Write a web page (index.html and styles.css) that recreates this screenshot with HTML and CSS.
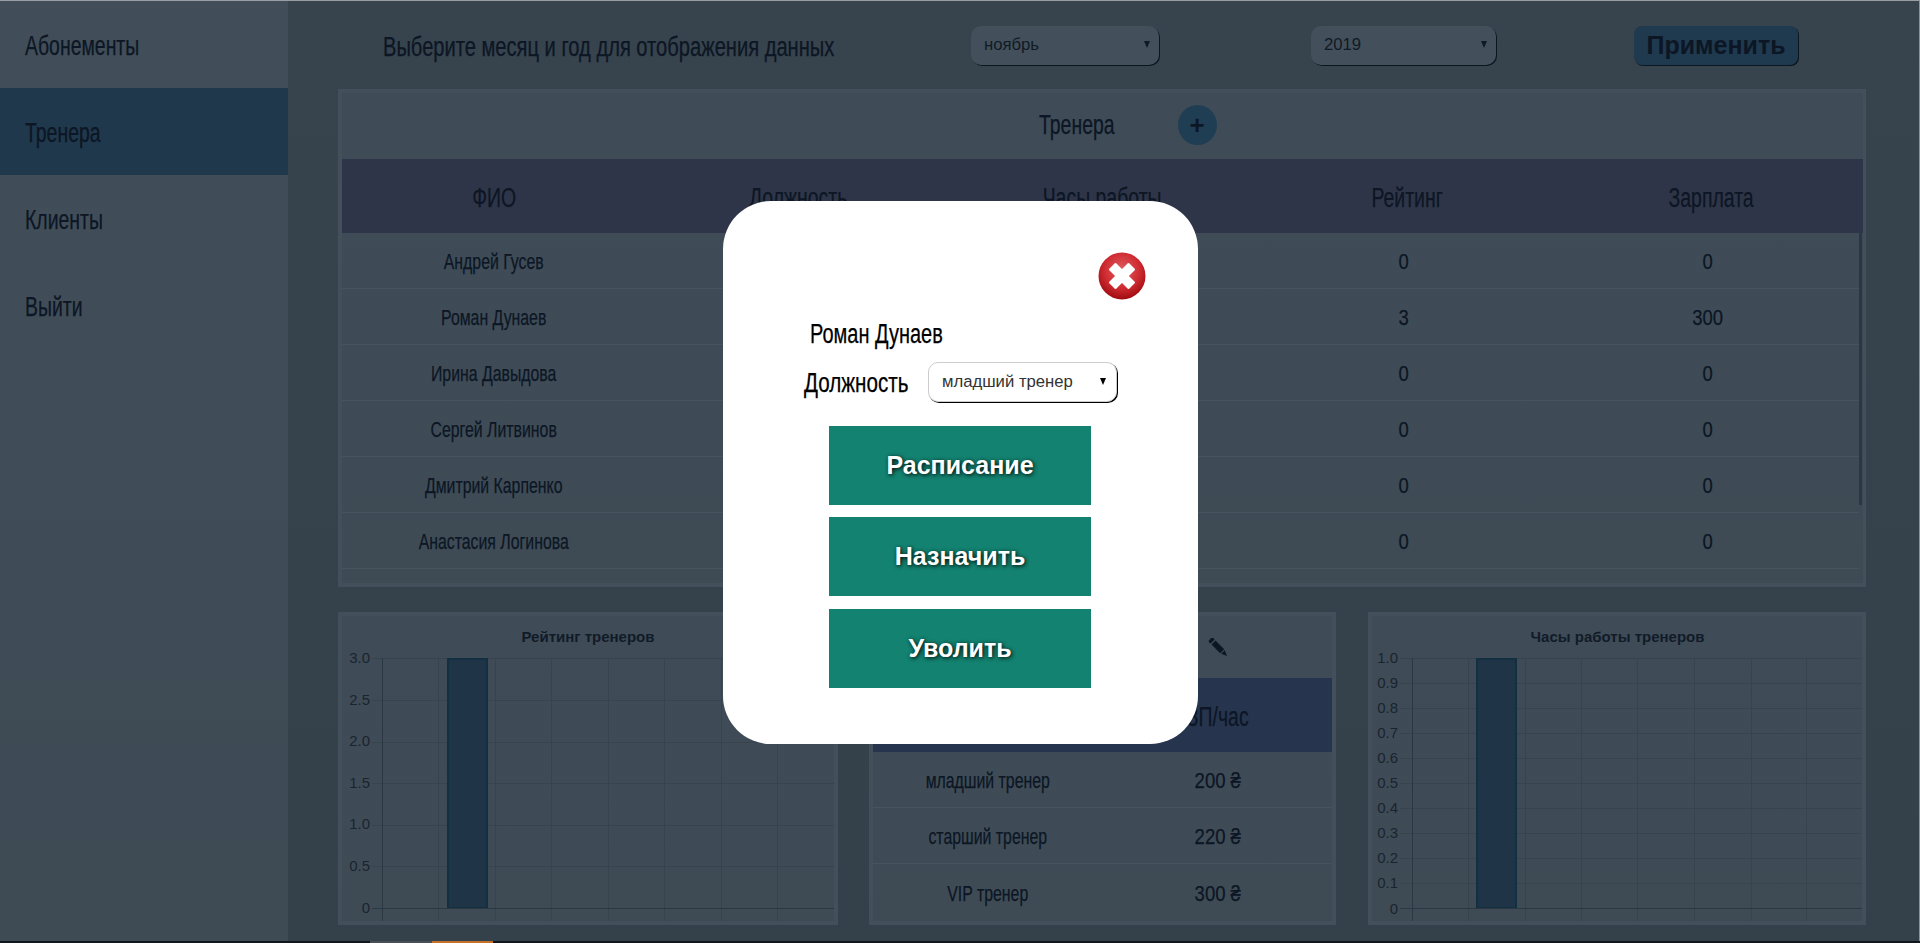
FILE: index.html
```html
<!DOCTYPE html>
<html lang="ru">
<head>
<meta charset="utf-8">
<title>Тренера</title>
<link rel="stylesheet" href="styles.css">
</head>
<body>
<div class="app">
  <nav class="sidebar">
    <a class="nav-item"><span class="cond-left">Абонементы</span></a>
    <a class="nav-item nav-item-active"><span class="cond-left">Тренера</span></a>
    <a class="nav-item"><span class="cond-left">Клиенты</span></a>
    <a class="nav-item"><span class="cond-left">Выйти</span></a>
  </nav>
  <main class="main">
    <header class="filters">
      <span class="filters-label cond-left">Выберите месяц и год для отображения данных</span>
      <div class="fake-select month-select"><span>ноябрь</span><i class="arrow"></i></div>
      <div class="fake-select year-select"><span>2019</span><i class="arrow"></i></div>
      <button class="apply">Применить</button>
    </header>
    <section class="panel trainers">
      <div class="panel-title-row">
        <span class="panel-title cond-left">Тренера</span>
        <span class="add-btn">+</span>
      </div>
      <div class="table-head cols-5">
        <span>ФИО</span><span>Должность</span><span>Часы работы</span><span>Рейтинг</span><span>Зарплата</span>
      </div>
      <div class="table-body">
        <div class="row cols-5"><span>Андрей Гусев</span><span></span><span></span><span class="num">0</span><span class="num">0</span></div>
        <div class="row cols-5"><span>Роман Дунаев</span><span></span><span></span><span class="num">3</span><span class="num">300</span></div>
        <div class="row cols-5"><span>Ирина Давыдова</span><span></span><span></span><span class="num">0</span><span class="num">0</span></div>
        <div class="row cols-5"><span>Сергей Литвинов</span><span></span><span></span><span class="num">0</span><span class="num">0</span></div>
        <div class="row cols-5"><span>Дмитрий Карпенко</span><span></span><span></span><span class="num">0</span><span class="num">0</span></div>
        <div class="row cols-5"><span>Анастасия Логинова</span><span></span><span></span><span class="num">0</span><span class="num">0</span></div>
      </div>
    </section>
    <div class="bottom">
      <section class="panel chart-panel chart-left">
        <svg class="chart" viewBox="0 0 492 305" width="492" height="305">
          <text class="chart-title" x="246" y="26">Рейтинг тренеров</text>
          <path class="grid" d="M30 42.500H492M30 84.500H492M30 126.500H492M30 167.500H492M30 209.500H492M30 250.500H492M96.500 42V305M153.500 42V305M209.500 42V305M266.500 42V305M322.500 42V305M379.500 42V305M435.500 42V305"/>
          <rect class="bar" x="106" y="43" width="39" height="249"/>
          <path class="axis" d="M40.500 42V305M30 292.500H492"/>
          <g class="ticks">
            <text x="28" y="47">3.0</text><text x="28" y="89">2.5</text><text x="28" y="130">2.0</text>
            <text x="28" y="172">1.5</text><text x="28" y="213">1.0</text><text x="28" y="255">0.5</text><text x="28" y="297">0</text>
          </g>
        </svg>
      </section>
      <section class="panel rates">
        <div class="panel-title-row rates-title">
          <svg class="pencil" viewBox="0 0 20 20" width="20" height="20">
            <path d="M1.200 3.200 L3.200 1.200 Q4.200 .4 5.200 1.200 L6.600 2.600 L2.600 6.600 L1.200 5.200 Q.4 4.200 1.200 3.200Z"/>
            <path d="M3.500 7.500 L7.500 3.500 L16.200 12.200 L12.200 16.200Z"/>
            <path d="M13.200 16.800 L16.800 13.200 L19 19Z"/>
          </svg>
        </div>
        <div class="table-head rates-head cols-2"><span></span><span>ЗП/час</span></div>
        <div class="row cols-2"><span>младший тренер</span><span class="num">200 ₴</span></div>
        <div class="row cols-2"><span>старший тренер</span><span class="num">220 ₴</span></div>
        <div class="row cols-2"><span>VIP тренер</span><span class="num">300 ₴</span></div>
      </section>
      <section class="panel chart-panel chart-right">
        <svg class="chart" viewBox="0 0 490 305" width="490" height="305">
          <text class="chart-title" x="245.500" y="26">Часы работы тренеров</text>
          <path class="grid" d="M28 42.500H490M28 67.500H490M28 92.500H490M28 117.500H490M28 142.500H490M28 167.500H490M28 192.500H490M28 217.500H490M28 242.500H490M28 267.500H490M96.500 42V305M153.500 42V305M209.500 42V305M265.500 42V305M322.500 42V305M379.500 42V305M434.500 42V305"/>
          <rect class="bar" x="105" y="43" width="39" height="249"/>
          <path class="axis" d="M40.500 42V305M28 292.500H490"/>
          <g class="ticks">
            <text x="26" y="47">1.0</text><text x="26" y="72">0.9</text><text x="26" y="97">0.8</text><text x="26" y="122">0.7</text><text x="26" y="147">0.6</text><text x="26" y="172">0.5</text><text x="26" y="197">0.4</text><text x="26" y="222">0.3</text><text x="26" y="247">0.2</text><text x="26" y="272">0.1</text><text x="26" y="298">0</text>
          </g>
        </svg>
      </section>
    </div>
  </main>
</div>
<div class="taskbar"><span class="task-tab"></span><span class="task-tab-active"></span></div>
<div class="modal">
  <div class="modal-close-row">
    <svg class="close-icon" viewBox="0 0 48 48" width="48" height="48">
      <defs>
        <radialGradient id="redBall" cx="50%" cy="38%" r="60%">
          <stop offset="0" stop-color="#e05f63"/><stop offset=".62" stop-color="#cf2c32"/><stop offset="1" stop-color="#a30e13"/>
        </radialGradient>
      </defs>
      <circle cx="24" cy="24" r="23.500" fill="url(#redBall)"/>
      <path d="M12 17.500 L17.500 12 L24 18.500 L30.500 12 L36 17.500 L29.500 24 L36 30.500 L30.500 36 L24 29.500 L17.500 36 L12 30.500 L18.500 24Z" fill="#fff" stroke="#fff" stroke-width="2" stroke-linejoin="round"/>
    </svg>
  </div>
  <div class="modal-name"><span class="cond-left name-text">Роман Дунаев</span></div>
  <div class="modal-role">
    <label class="modal-role-label"><span class="cond-left role-text">Должность</span></label>
    <div class="fake-select role-select"><span>младший тренер</span><i class="arrow"></i></div>
  </div>
  <div class="modal-actions">
    <button class="action">Расписание</button>
    <button class="action">Назначить</button>
    <button class="action action-last">Уволить</button>
  </div>
</div>
</body>
</html>
```
FILE: styles.css
```css
* { box-sizing: border-box; }
html, body { margin: 0; height: 943px; overflow: hidden; }
body {
  position: relative;
  width: 1920px;
  background: #36424c;
  font-family: "Liberation Sans", sans-serif;
  color: #0c1624;
}
/* Condensed headline look, anchored at the left edge of its box */
.cond-left {
  display: inline-block;
  white-space: nowrap;
  transform: scaleX(.72);
  transform-origin: 0 50%;
  -webkit-text-stroke: .25px currentColor;
}
.app {
  display: flex;
  height: 941px;
  border-top: 1px solid #9a9ea3;
  border-right: 1px solid #8d9297;
}
.sidebar {
  width: 288px;
  flex: none;
  background: linear-gradient(#414d58, #3e4b55);
}
.nav-item {
  display: flex;
  align-items: center;
  height: 87px;
  padding: 3px 0 0 25px;
  font-size: 27px;
}
.nav-item-active { background: #1f384c; }
.main {
  flex: 1;
  padding-left: 50px;
  background: linear-gradient(#37434d, #35414a);
}
.filters {
  display: flex;
  align-items: center;
  height: 88px;
  padding-left: 45px;
}
.filters-label {
  flex: none;
  width: 588px;
  padding-top: 5px;
  font-size: 27px;
  transform: scaleX(.745);
}
.fake-select {
  display: flex;
  align-items: center;
  justify-content: space-between;
  height: 39px;
  border-radius: 10px;
  background: #43505b;
  box-shadow: 1px 1px 0 #0c1620;
  font-size: 16.700px;
  padding: 0 9px 1px 13px;
  color: #101a26;
}
.arrow {
  width: 0;
  height: 0;
  border-left: 3.500px solid transparent;
  border-right: 3.500px solid transparent;
  border-top: 7px solid currentColor;
}
.month-select { width: 188px; margin-right: 152px; }
.year-select { width: 185px; margin-right: 138px; }
.apply {
  width: 164px;
  height: 39px;
  border: 0;
  border-radius: 8px;
  background: #1f3a4f;
  box-shadow: 1px 1px 0 #0c1620;
  font-family: "Liberation Sans", sans-serif;
  font-weight: 700;
  font-size: 25px;
  color: #0c1624;
  padding: 0;
}
.panel {
  background: linear-gradient(#3f4b57, #3e4b55);
  border: 4px solid #43505b;
}
.trainers {
  width: 1528px;
  height: 498px;
  overflow: hidden;
  border-right-width: 3px;
}
.panel-title-row {
  display: flex;
  align-items: center;
  justify-content: center;
  gap: 63px;
  height: 66px;
  padding: 0 0 2px 50px;
}
.panel-title { flex: none; width: 76px; font-size: 27px; }
.add-btn {
  display: flex;
  align-items: center;
  justify-content: center;
  flex: none;
  width: 39px;
  height: 40px;
  border-radius: 50%;
  background: #1f3e54;
  font-weight: 700;
  font-size: 26px;
  line-height: 1;
}
.table-head {
  display: grid;
  align-items: center;
  height: 74px;
  padding-top: 5px;
  background: #2f3548;
  text-align: center;
  font-size: 27px;
}
.cols-5 { grid-template-columns: repeat(5, 1fr); }
.cols-2 { grid-template-columns: repeat(2, 1fr); }
.table-head span, .row span {
  white-space: nowrap;
  transform: scaleX(.72);
  -webkit-text-stroke: .25px currentColor;
}
.row .num { transform: scaleX(.84); }
.table-body {
  height: 272px;
  margin-right: 1px;
  border-right: 3px solid #2a3844;
}
.row {
  display: grid;
  align-items: center;
  height: 56px;
  padding-top: 3px;
  text-align: center;
  font-size: 22px;
  border-bottom: 1px solid #47545f;
}
.bottom {
  display: flex;
  margin-top: 25px;
}
.chart-panel { height: 313px; }
.chart-left { width: 500px; margin-right: 31px; }
.chart-right { width: 498px; margin-left: 32px; }
.rates { width: 467px; height: 313px; }
.rates-title { height: 62px; padding: 0 0 0 230px; }
.rates-head { background: #26344e; }
.rates .row:last-child { border-bottom: 0; }
.pencil { display: block; fill: #0c1624; }
.chart { display: block; }
.chart-title {
  font-family: "Liberation Sans", sans-serif;
  font-weight: 700;
  font-size: 15px;
  text-anchor: middle;
  fill: #111b28;
}
.grid { stroke: #37434d; stroke-width: 1; fill: none; }
.axis { stroke: #2b3742; stroke-width: 1; fill: none; }
.bar { fill: #1f3547; stroke: #132f42; stroke-width: 2; }
.ticks text {
  font-family: "Liberation Sans", sans-serif;
  font-size: 15px;
  text-anchor: end;
  fill: #1a242f;
}
.taskbar {
  position: absolute;
  left: 0;
  right: 0;
  bottom: 0;
  display: flex;
  height: 2px;
  padding-left: 370px;
  background: #10161b;
}
.task-tab { width: 62px; background: #4a4f55; }
.task-tab-active { width: 61px; background: #c4722a; }
.modal {
  position: absolute;
  left: 723px;
  top: 201px;
  width: 475px;
  height: 543px;
  border-radius: 48px;
  background: #fff;
  color: #000;
  font-size: 27px;
  padding-top: 51px;
}
.modal-close-row {
  display: flex;
  justify-content: flex-end;
  padding-right: 52px;
}
.close-icon { display: block; }
.modal-name { margin: 14px 0 0 87px; line-height: 40px; }
.name-text { transform: scaleX(.74); }
.modal-role {
  display: flex;
  align-items: center;
  gap: 21px;
  margin: 8px 0 0 81px;
}
.modal-role-label { flex: none; width: 103px; padding-top: 2px; }
.role-text { transform: scaleX(.765); }
.role-select {
  flex: none;
  width: 189px;
  height: 40px;
  background: #fff;
  border: 1px solid #ccc;
  box-shadow: 1px 1px 0 #000;
  color: #333;
  padding-right: 10px;
}
.role-select .arrow { color: #000; }
.modal-actions {
  display: flex;
  flex-direction: column;
  gap: 12px;
  margin: 24px 0 0 106px;
}
.action {
  width: 262px;
  height: 79px;
  border: 0;
  padding: 0;
  background: #138270;
  color: #fff;
  font-family: "Liberation Sans", sans-serif;
  font-weight: 700;
  font-size: 25px;
  text-shadow: 1px 1px 4px #000;
}
.action-last { margin-top: 1px; }
```
